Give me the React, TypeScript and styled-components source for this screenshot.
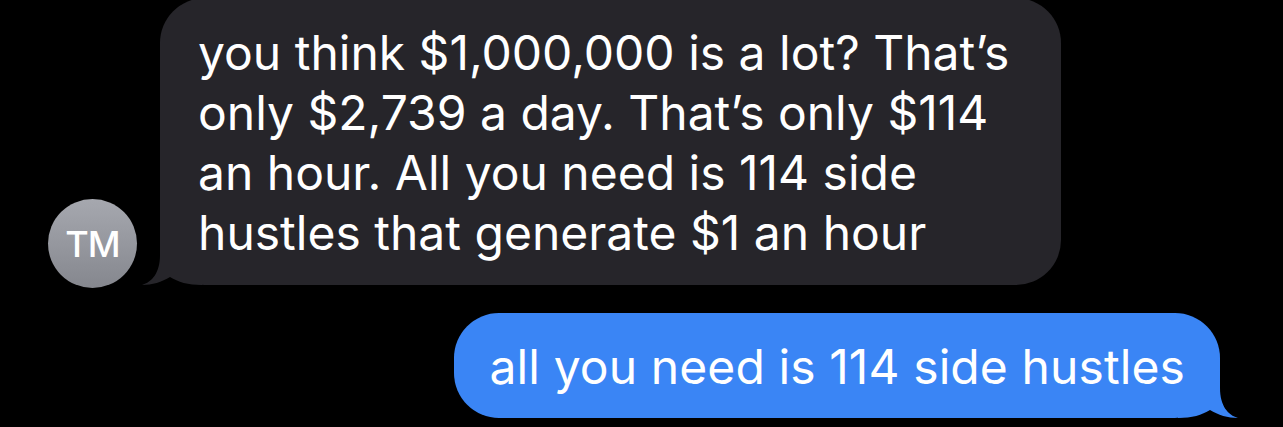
import styled, { createGlobalStyle } from 'styled-components';

const GlobalStyle = createGlobalStyle`
  html, body {
    margin: 0;
    padding: 0;
    background: #000000;
  }
  body {
    font-family: Inter, "Noto Sans", "Liberation Sans", sans-serif;
    -webkit-font-smoothing: antialiased;
  }
`;

type Side = 'left' | 'right';

const incomingLines = [
  'you think $1,000,000 is a lot? That\u2019s',
  'only $2,739 a day. That\u2019s only $114',
  'an hour. All you need is 114 side',
  'hustles that generate $1 an hour',
];

// the little curled corner under each bubble
const Tail = ({ side, color }: { side: Side; color: string }) => (
  <TailSvg $side={side} viewBox="0 0 60 50" width="60" height="50">
    <path
      d="M18 0 L18 20 C18 38 10 47 0 50 C10 50 20 47 28 42 C36 47 46 50 60 50 L60 0 Z"
      fill={color}
    />
  </TailSvg>
);

const App = () => {
  return (
    <>
      <GlobalStyle />
      <Thread>
        <IncomingRow>
          <Avatar>TM</Avatar>
          <Bubble $side="left">
            <Tail side="left" color="#26252a" />
            {incomingLines.map((line) => (
              <Line key={line}>{line}</Line>
            ))}
          </Bubble>
        </IncomingRow>
        <OutgoingRow>
          <Bubble $side="right">
            <Tail side="right" color="#3a85f5" />
            <Line>all you need is 114 side hustles</Line>
          </Bubble>
        </OutgoingRow>
      </Thread>
    </>
  );
};

export default App;

const Thread = styled.div`
  width: 1283px;
  height: 427px;
  overflow: hidden;
  display: flex;
  flex-direction: column;
  gap: 28px;
  background: #000000;
`;

const IncomingRow = styled.div`
  display: flex;
  align-items: flex-end;
  gap: 23px;
  padding-left: 48px;
  margin-top: -2px;
`;

const OutgoingRow = styled.div`
  display: flex;
  justify-content: flex-end;
  padding-right: 63px;
`;

const Avatar = styled.div`
  flex: none;
  width: 89px;
  height: 89px;
  margin-bottom: -3px;
  border-radius: 50%;
  background: linear-gradient(180deg, #a6a8af 0%, #85878e 100%);
  color: #ffffff;
  display: flex;
  align-items: center;
  justify-content: center;
  font-size: 36px;
  font-weight: 500;
  letter-spacing: -1px;
`;

const Bubble = styled.div<{ $side: Side }>`
  position: relative;
  background: ${({ $side }) => ($side === 'left' ? '#26252a' : '#3a85f5')};
  color: #ffffff;
  border-radius: 45px;
  padding: ${({ $side }) => ($side === 'left' ? '25px 52px 22px 38px' : '24px 35px 21px 36px')};
  font-size: 48px;
  line-height: 60px;
  letter-spacing: ${({ $side }) => ($side === 'left' ? '0' : '0.1px')};
  white-space: nowrap;
`;

const Line = styled.div`
  position: relative;
  display: block;
`;

const TailSvg = styled.svg<{ $side: Side }>`
  position: absolute;
  bottom: 0;
  ${({ $side }) => ($side === 'left' ? 'left: -18px;' : 'right: -18px; transform: scaleX(-1);')}
  pointer-events: none;
`;
